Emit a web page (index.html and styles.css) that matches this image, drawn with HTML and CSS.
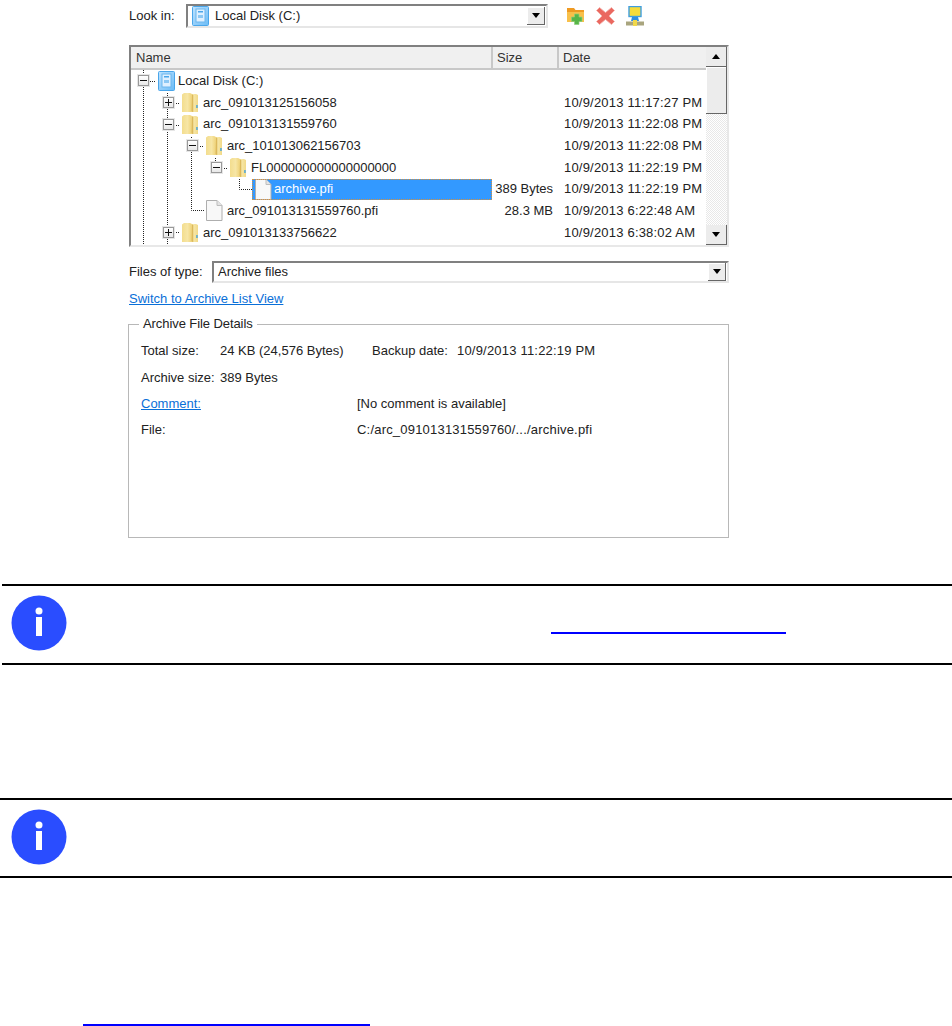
FILE: index.html
```html
<!DOCTYPE html>
<html lang="en">
<head>
<meta charset="utf-8">
<title>Archive browser</title>
<link rel="stylesheet" href="styles.css">
</head>
<body>
<svg class="defs" width="0" height="0" aria-hidden="true">
  <defs>
    <linearGradient id="fg" x1="0" x2="1" y1="0" y2="0">
      <stop offset="0" stop-color="#f3dd8e"/><stop offset=".35" stop-color="#f7e6a6"/><stop offset=".58" stop-color="#f0d57e"/><stop offset=".7" stop-color="#f8e9ab"/><stop offset="1" stop-color="#f1d988"/>
    </linearGradient>
    <linearGradient id="dg" x1="0" x2="1" y1="0" y2="1">
      <stop offset="0" stop-color="#bfe3ff"/><stop offset="1" stop-color="#6cbcf6"/>
    </linearGradient>
    <symbol id="folder" viewBox="0 0 16 21">
      <path d="M0 2.500 2 1h6l2 1h4l2 1v17H0z" fill="url(#fg)"/>
      <path d="M10 2.500 9.500 19 10.500 20h.8V3z" fill="#dcb95c"/>
      <rect x="14.200" y="13" width="1.500" height="3" fill="#4da6d8"/>
    </symbol>
    <symbol id="doc" viewBox="0 0 18 21">
      <path d="M1.500 .5h10.500l5 5v15h-15.500z" fill="#f8f8f8" stroke="#aeaeae"/>
      <path d="M12 .5v5h5" fill="#e4e4e4" stroke="#bdbdbd"/>
    </symbol>
    <symbol id="disk" viewBox="0 0 17 20">
      <rect x=".5" y=".5" width="16" height="19" rx="1" fill="url(#dg)" stroke="#4aa6ea"/>
      <rect x="4" y="3" width="9" height="13" fill="#dff0ff" stroke="#6bb6ee"/>
      <rect x="6" y="5" width="5" height="1.500" fill="#4aa6ea"/>
      <rect x="6" y="9" width="5" height="3" fill="#8cc8f4"/>
    </symbol>
  </defs>
</svg>

<main class="dialog">
  <div class="look-row">
    <span class="look-label">Look in:</span>
    <div class="combo combo-look">
      <svg class="combo-icon" width="17" height="20"><use href="#disk"/></svg>
      <span class="combo-text">Local Disk (C:)</span>
      <span class="drop"><i class="arrow-down"></i></span>
    </div>
    <div class="tools">
      <svg width="19" height="18" viewBox="0 0 19 18" aria-label="New folder">
        <path d="M1 5V1h7l1.500 2H18v12H1z" fill="#ef9a22"/>
        <path d="M1 5h17v10H1z" fill="#f8c04a"/>
        <path d="M8.500 7h4.500v3h3v4.500h-3v3H8.500v-3h-3V10h3z" fill="#57b548" stroke="#8fd07e" stroke-width=".7"/>
      </svg>
      <svg width="19" height="18" viewBox="0 0 19 18" aria-label="Delete">
        <path d="M3.500 .5 9.500 5.500 15.500 .5 18.500 3.500 13 9 18.500 14.500 15.500 17.500 9.500 12.500 3.500 17.500 .5 14.500 6 9 .5 3.500z" fill="#ea6860" stroke="#f4b0aa" stroke-width=".8"/>
      </svg>
      <svg width="18" height="20" viewBox="0 0 18 20" aria-label="Network">
        <rect x="3" y=".5" width="12" height="10" fill="#f7dc3a" stroke="#3f9ee0" stroke-width="1.400"/>
        <path d="M6 11h6l1 4H5z" fill="#2f8fe0"/>
        <rect x="0" y="15.500" width="18" height="4" fill="#a9a57e"/>
        <rect x="7" y="14" width="4" height="6" fill="#f1d84a"/>
      </svg>
    </div>
  </div>

  <section class="list">
    <div class="list-head">
      <span class="col col-name">Name</span>
      <span class="col col-size">Size</span>
      <span class="col col-date">Date</span>
    </div>
    <div class="list-body">
      <svg class="wires" width="360" height="176" aria-hidden="true">
        <g fill="none" stroke="#222" stroke-dasharray="1 1">
          <path d="M12.500 0v6M12.500 17v159"/>
          <path d="M36.500 23v5M36.500 39v10M36.500 60v98M36.500 169v7"/>
          <path d="M60.500 67v4M60.500 82v58.500H74"/>
          <path d="M84.500 88v5M108.500 109v10.500H121"/>
          <path d="M19 11.500h5M43 33.500h5M43 55.500h5M67 76.500h5M91 98.500h5M43 162.500h5"/>
        </g>
      </svg>
      <div class="row d0"><b class="minus"></b><svg class="ic ic-disk" width="17" height="20"><use href="#disk"/></svg><span class="nm">Local Disk (C:)</span></div>
      <div class="row d1"><b class="plus"></b><svg class="ic" width="16" height="21"><use href="#folder"/></svg><span class="nm">arc_091013125156058</span><span class="dt">10/9/2013 11:17:27 PM</span></div>
      <div class="row d1"><b class="minus"></b><svg class="ic" width="16" height="21"><use href="#folder"/></svg><span class="nm">arc_091013131559760</span><span class="dt">10/9/2013 11:22:08 PM</span></div>
      <div class="row d2"><b class="minus"></b><svg class="ic" width="16" height="21"><use href="#folder"/></svg><span class="nm">arc_101013062156703</span><span class="dt">10/9/2013 11:22:08 PM</span></div>
      <div class="row d3"><b class="minus"></b><svg class="ic" width="16" height="21"><use href="#folder"/></svg><span class="nm">FL000000000000000000</span><span class="dt">10/9/2013 11:22:19 PM</span></div>
      <div class="row d4"><div class="sel"><svg class="ic" width="18" height="21"><use href="#doc"/></svg><span class="nm">archive.pfi</span></div><span class="sz">389 Bytes</span><span class="dt">10/9/2013 11:22:19 PM</span></div>
      <div class="row d2b"><svg class="ic" width="18" height="21"><use href="#doc"/></svg><span class="nm">arc_091013131559760.pfi</span><span class="sz">28.3 MB</span><span class="dt">10/9/2013 6:22:48 AM</span></div>
      <div class="row d1"><b class="plus"></b><svg class="ic" width="16" height="21"><use href="#folder"/></svg><span class="nm">arc_091013133756622</span><span class="dt">10/9/2013 6:38:02 AM</span></div>
    </div>
    <div class="scroll">
      <span class="sbtn"><i class="arrow-up"></i></span>
      <span class="thumb"></span>
      <span class="track"></span>
      <span class="sbtn"><i class="arrow-down"></i></span>
    </div>
  </section>

  <div class="type-row">
    <span class="type-label">Files of type:</span>
    <div class="combo combo-type">
      <span class="combo-text">Archive files</span>
      <span class="drop"><i class="arrow-down"></i></span>
    </div>
  </div>

  <a class="switch" href="#">Switch to Archive List View</a>

  <fieldset class="details">
    <legend>Archive File Details</legend>
    <div class="grid">
      <span>Total size:</span><span>24 KB (24,576 Bytes)</span><span class="c4">Backup date:</span><span class="wide">10/9/2013 11:22:19 PM</span>
      <span>Archive size:</span><span class="full2">389 Bytes</span>
      <a class="c1" href="#">Comment:</a><span class="c3">[No comment is available]</span>
      <span>File:</span><span class="c3 wide">C:/arc_091013131559760/.../archive.pfi</span>
    </div>
  </fieldset>
</main>

<aside class="note note-first">
  <svg class="info" width="56" height="56" viewBox="0 0 56 56" aria-label="Information">
    <circle cx="28" cy="28" r="27.500" fill="#2a4dff"/>
    <circle cx="28" cy="16" r="3.500" fill="#fff"/>
    <rect x="25" y="22" width="6" height="19" fill="#fff"/>
  </svg>
  <a class="rule rule-a" href="#" aria-label="link"></a>
</aside>

<aside class="note note-second">
  <svg class="info" width="56" height="56" viewBox="0 0 56 56" aria-label="Information">
    <circle cx="28" cy="28" r="27.500" fill="#2a4dff"/>
    <circle cx="28" cy="16" r="3.500" fill="#fff"/>
    <rect x="25" y="22" width="6" height="19" fill="#fff"/>
  </svg>
</aside>

<a class="rule rule-b" href="#" aria-label="link"></a>
</body>
</html>
```

FILE: styles.css
```css
* { box-sizing: border-box; }
html, body { margin: 0; padding: 0; }
body {
  width: 952px;
  height: 1026px;
  overflow: hidden;
  background: #fff;
  color: #222;
  font: 13px/16px "Liberation Sans", Arial, sans-serif;
}
.defs { position: absolute; }
.dialog { margin-left: 128px; width: 602px; height: 584px; padding-top: 4px; }

.look-row { display: flex; align-items: center; height: 24px; }
.look-label { width: 58px; padding-left: 1px; }
.combo {
  display: flex;
  align-items: center;
  border: 2px solid #808080;
  border-right-color: #e6e6e6;
  border-bottom-color: #e6e6e6;
  background: #fff;
}
.combo-look { width: 362px; height: 24px; padding-left: 4px; }
.combo-text { flex: 1; }
.combo-look .combo-text { padding-left: 6px; }
.combo-icon { flex: none; }
.drop {
  width: 18px;
  height: 18px;
  margin-right: 1px;
  display: flex;
  align-items: center;
  justify-content: center;
  background: #ececec;
  border-right: 1px solid #666;
  border-bottom: 1px solid #666;
  box-shadow: inset 1px 1px 0 #fff;
}
.arrow-down, .arrow-up { width: 0; height: 0; border: 4px solid transparent; }
.arrow-down { border-top: 5px solid #000; border-bottom: 0; }
.arrow-up { border-bottom: 5px solid #000; border-top: 0; }
.tools { display: flex; align-items: center; margin-left: 18px; gap: 11px; }

.list {
  position: relative;
  margin: 17px 0 0 1px;
  width: 600px;
  height: 202px;
  border: 2px solid #808080;
  border-right-color: #e8e8e8;
  border-bottom-color: #e8e8e8;
  overflow: hidden;
}
.list-head { display: flex; height: 23px; margin-right: 21px; background: #f0f0f0; }
.col {
  padding: 3px 0 0 4px;
  border-right: 2px solid #c8c8c8;
  border-bottom: 2px solid #c8c8c8;
  color: #333;
}
.col-name { width: 362px; padding-left: 5px; }
.col-size { width: 66px; }
.col-date { flex: 1; border-right: 0; }
.list-body { position: relative; height: 175px; margin-right: 21px; padding-top: 0; }
.wires { position: absolute; left: 0; top: 0; }
.row { position: relative; height: 21.700px; display: flex; align-items: center; }
.row b {
  position: relative;
  flex: none;
  width: 11px;
  height: 11px;
  margin-right: 8px;
  border: 1px solid #999;
  background: linear-gradient(#fff, #e8e8e8);
  box-shadow: 0 0 0 1px #e6e6e6;
}
.row b::before { content: ""; position: absolute; left: 1px; top: 4px; width: 7px; height: 1px; background: #111; }
.plus::after { content: ""; position: absolute; left: 4px; top: 1px; width: 1px; height: 7px; background: #111; }
.ic { flex: none; margin-right: 5px; }
.ic-disk { margin-left: 1px; margin-right: 3px; }
.d0 { padding-left: 7px; }
.d1 { padding-left: 32px; }
.d2 { padding-left: 56px; }
.d3 { padding-left: 80px; }
.d4 { padding-left: 121px; }
.d2b { padding-left: 74px; }
.d2b .ic { margin-right: 4px; }
.nm { white-space: nowrap; }
.sel {
  display: flex;
  align-items: center;
  width: 240px;
  height: 21px;
  padding-left: 2px;
  background: #3399ff;
  color: #fff;
  outline: 1px dotted #d8903a;
  outline-offset: -1px;
}
.sel .ic { margin-right: 2px; }
.sz, .dt { position: absolute; white-space: nowrap; top: 3px; }
.sz { right: 153px; }
.dt { left: 433px; letter-spacing: .2px; }
.scroll {
  position: absolute;
  right: 0;
  top: 0;
  bottom: 0;
  width: 21px;
  display: flex;
  flex-direction: column;
  background: #f4f4f4;
}
.sbtn {
  flex: none;
  height: 20px;
  display: flex;
  align-items: center;
  justify-content: center;
  background: #ececec;
  border-right: 1px solid #666;
  border-bottom: 1px solid #666;
}
.thumb { flex: none; height: 47px; background: #ececec; border-right: 1px solid #666; border-bottom: 1px solid #666; box-shadow: inset 1px 1px 0 #fff; }
.track { flex: 1; background: repeating-conic-gradient(#fff 0 25%, #e8e8e8 0 50%) 0 0 / 2px 2px; }

.type-row { display: flex; align-items: center; margin: 14px 0 0 1px; height: 22px; }
.type-label { width: 83px; }
.combo-type { width: 517px; height: 22px; padding-left: 4px; }
.switch { display: block; margin: 8px 0 0 1px; color: #0a6fd8; }

.details {
  margin: 9px 0 0;
  padding: 0;
  width: 601px;
  height: 222px;
  border: 1px solid #b8b8b8;
}
.details legend { margin-left: 10px; padding: 0 4px; letter-spacing: -.08px; }
.grid {
  display: grid;
  grid-template-columns: 79px 137px 15px 85px 1fr;
  grid-template-rows: 28px 26px 26px 26px;
  align-items: center;
  padding: 5px 0 0 12px;
  white-space: nowrap;
}
.wide { letter-spacing: .2px; }
.c1 { grid-column: 1; color: #0a6fd8; }
.c3 { grid-column: 3 / 6; }
.c4 { grid-column: 4; }
.full2 { grid-column: 2 / 6; }

.note {
  display: flex;
  align-items: center;
  position: relative;
  height: 81px;
  border-top: 2px solid #000;
  border-bottom: 2px solid #000;
  padding-left: 11px;
}
.note-first { margin-left: 2px; padding-left: 9px; }
.note-second { margin-top: 133px; height: 80px; }
.info { flex: none; margin-bottom: 3px; }
.rule { display: block; height: 2px; background: #0000ff; }
.rule-a { width: 235px; margin: 17px 0 0 484px; }
.rule-b { width: 287px; margin: 146px 0 0 83px; }
```
